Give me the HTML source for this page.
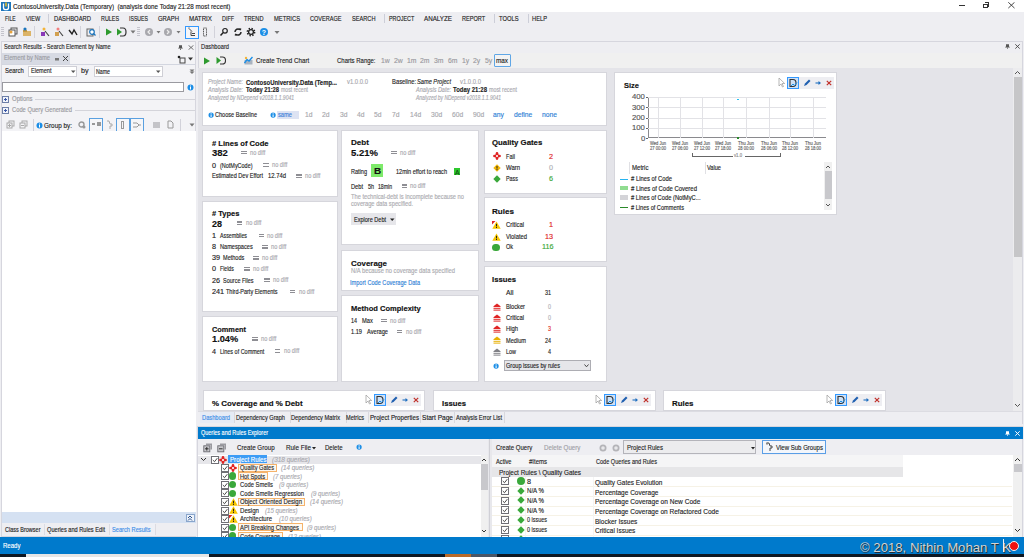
<!DOCTYPE html>
<html><head><meta charset="utf-8">
<style>
*{margin:0;padding:0;box-sizing:border-box}
html,body{width:1024px;height:557px;overflow:hidden;background:#eeeef2;font-family:"Liberation Sans", sans-serif;color:#1e1e1e;position:relative}
.a{position:absolute;white-space:pre;transform-origin:0 0;-webkit-text-stroke:0.15px currentColor}

.ln{background:#cfcfd6}

</style></head><body>
<div class="a" style="left:0px;top:0px;width:1024px;height:12px;background:#fff"></div>
<div class="a" style="left:1px;top:2px;width:10px;height:9px;background:#1c75bc"></div>
<svg class="a" style="left:1px;top:2px" width="10" height="9" viewBox="0 0 10 9"><path d="M2.5 1.5v4.2c0 1.3 1 2 2.5 2s2.5-.7 2.5-2V1.5" stroke="#fff" stroke-width="1.3" fill="none"/><rect x="4.3" y="0.5" width="1.4" height="4" fill="#f7c21c"/></svg>
<div class="a" style="left:12.5px;top:3.00px;font-size:8.05px;line-height:8.05px;color:#222;transform:scaleX(0.780);">ContosoUniversity.Data (Temporary)  (analysis done Today 21:28 most recent)</div>
<div class="a" style="left:959.3px;top:5px;width:6px;height:1px;background:#333"></div>
<div class="a" style="left:983.2px;top:3.8px;width:5px;height:4.5px;border:1px solid #333;background:#fff"></div>
<div class="a" style="left:984.7px;top:2.4px;width:4.6px;height:4.5px;border-top:1px solid #333;border-right:1px solid #333"></div>
<svg class="a" style="left:1007.5px;top:2.2px" width="7" height="7"><path d="M.3 .3l6.2 5.8M6.5 .3L.3 6.1" stroke="#333" stroke-width="0.9"/></svg>
<div class="a" style="left:0px;top:12px;width:1024px;height:28px;background:#eeeef2"></div>
<div class="a" style="left:4.5px;top:15.00px;font-size:7.24px;line-height:7.24px;color:#1e1e1e;transform:scaleX(0.687);">FILE</div>
<div class="a" style="left:25.6px;top:15.00px;font-size:7.24px;line-height:7.24px;color:#1e1e1e;transform:scaleX(0.762);">VIEW</div>
<div class="a" style="left:54px;top:15.00px;font-size:7.24px;line-height:7.24px;color:#1e1e1e;transform:scaleX(0.807);">DASHBOARD</div>
<div class="a" style="left:101px;top:15.00px;font-size:7.24px;line-height:7.24px;color:#1e1e1e;transform:scaleX(0.746);">RULES</div>
<div class="a" style="left:129px;top:15.00px;font-size:7.24px;line-height:7.24px;color:#1e1e1e;transform:scaleX(0.716);">ISSUES</div>
<div class="a" style="left:158px;top:15.00px;font-size:7.24px;line-height:7.24px;color:#1e1e1e;transform:scaleX(0.816);">GRAPH</div>
<div class="a" style="left:189px;top:15.00px;font-size:7.24px;line-height:7.24px;color:#1e1e1e;transform:scaleX(0.858);">MATRIX</div>
<div class="a" style="left:222px;top:15.00px;font-size:7.24px;line-height:7.24px;color:#1e1e1e;transform:scaleX(0.746);">DIFF</div>
<div class="a" style="left:244px;top:15.00px;font-size:7.24px;line-height:7.24px;color:#1e1e1e;transform:scaleX(0.782);">TREND</div>
<div class="a" style="left:274px;top:15.00px;font-size:7.24px;line-height:7.24px;color:#1e1e1e;transform:scaleX(0.798);">METRICS</div>
<div class="a" style="left:310px;top:15.00px;font-size:7.24px;line-height:7.24px;color:#1e1e1e;transform:scaleX(0.766);">COVERAGE</div>
<div class="a" style="left:351.5px;top:15.00px;font-size:7.24px;line-height:7.24px;color:#1e1e1e;transform:scaleX(0.779);">SEARCH</div>
<div class="a" style="left:388.7px;top:15.00px;font-size:7.24px;line-height:7.24px;color:#1e1e1e;transform:scaleX(0.749);">PROJECT</div>
<div class="a" style="left:424px;top:15.00px;font-size:7.24px;line-height:7.24px;color:#1e1e1e;transform:scaleX(0.863);">ANALYZE</div>
<div class="a" style="left:461.5px;top:15.00px;font-size:7.24px;line-height:7.24px;color:#1e1e1e;transform:scaleX(0.770);">REPORT</div>
<div class="a" style="left:498.5px;top:15.00px;font-size:7.24px;line-height:7.24px;color:#1e1e1e;transform:scaleX(0.799);">TOOLS</div>
<div class="a" style="left:532px;top:15.00px;font-size:7.24px;line-height:7.24px;color:#1e1e1e;transform:scaleX(0.793);">HELP</div>
<div class="a" style="left:47.5px;top:14px;width:1px;height:9px;background:#ccced8"></div>
<div class="a" style="left:383.5px;top:14px;width:1px;height:9px;background:#ccced8"></div>
<div class="a" style="left:493.5px;top:14px;width:1px;height:9px;background:#ccced8"></div>
<div class="a" style="left:527.5px;top:14px;width:1px;height:9px;background:#ccced8"></div>
<div class="a" style="left:1px;top:27px;width:3px;height:10px;background:repeating-linear-gradient(#c4c4cc 0 1px,transparent 1px 2px)"></div>
<div class="a" style="left:137px;top:27px;width:3px;height:10px;background:repeating-linear-gradient(#c4c4cc 0 1px,transparent 1px 2px)"></div>
<div class="a" style="left:34px;top:26px;width:1px;height:12px;background:#d2d2da"></div>
<div class="a" style="left:80px;top:26px;width:1px;height:12px;background:#d2d2da"></div>
<div class="a" style="left:99px;top:26px;width:1px;height:12px;background:#d2d2da"></div>
<div class="a" style="left:214px;top:26px;width:1px;height:12px;background:#d2d2da"></div>
<svg class="a" style="left:8px;top:27px" width="10" height="10"><rect x="3" y="1" width="6" height="6" fill="none" stroke="#555"/><rect x="1" y="3" width="6" height="6" fill="#fff" stroke="#555"/><circle cx="3" cy="5" r="1.5" fill="#e6a23c"/></svg>
<svg class="a" style="left:22px;top:27px" width="10" height="10"><rect x="1" y="4" width="8" height="5" fill="#dcb468"/><rect x="1" y="3" width="4" height="2" fill="#c99a3e"/><circle cx="3" cy="2" r="1.6" fill="#1c75bc"/></svg>
<svg class="a" style="left:40px;top:27px" width="10" height="10"><rect x="1" y="5" width="4" height="4" fill="#8a39b8"/><path d="M5 4l4 5" stroke="#444" stroke-width="1.2"/><circle cx="4" cy="2" r="1.5" fill="#f3b43a"/></svg>
<svg class="a" style="left:54px;top:27px" width="10" height="10"><rect x="1" y="5" width="4" height="4" fill="#d2a050"/><path d="M5 4l4 5" stroke="#444" stroke-width="1.2"/><circle cx="4" cy="2" r="1.5" fill="#f28080"/></svg>
<svg class="a" style="left:68px;top:27px" width="10" height="10"><path d="M1 3l3 4 2-4 3 5" stroke="#222" stroke-width="1.4" fill="none"/></svg>
<svg class="a" style="left:86px;top:27px" width="10" height="10"><rect x="1" y="2" width="6" height="7" fill="none" stroke="#666"/><circle cx="6" cy="5" r="2.3" fill="#fff" stroke="#1c75bc" stroke-width="1.2"/><path d="M7.5 6.5l2 2" stroke="#1c75bc" stroke-width="1.3"/></svg>
<svg class="a" style="left:104px;top:27px" width="10" height="10"><path d="M2 1.5l6 3.5-6 3.5z" fill="#2e9a2e"/></svg>
<svg class="a" style="left:116px;top:27px" width="11" height="10"><path d="M1 1.5l5 3.5-5 3.5z" fill="#2e9a2e"/><path d="M4 1h3c2 0 3 1.5 3 4s-1 4-3 4H4" stroke="#333" stroke-width="1.2" fill="none"/></svg>
<svg class="a" style="left:130px;top:29px" width="6" height="6"><path d="M0.5 1.5h5L3 4.5z" fill="#777"/></svg>
<svg class="a" style="left:144px;top:27px" width="10" height="10"><circle cx="5" cy="5" r="4" fill="#a8a8ad"/><path d="M6 3L4 5l2 2" stroke="#eee" stroke-width="1.2" fill="none"/></svg>
<svg class="a" style="left:156px;top:30px" width="5" height="5"><path d="M0.5 1h4L2.5 3.5z" fill="#777"/></svg>
<svg class="a" style="left:163px;top:27px" width="10" height="10"><circle cx="5" cy="5" r="4" fill="#a8a8ad"/><path d="M4 3l2 2-2 2" stroke="#eee" stroke-width="1.2" fill="none"/></svg>
<svg class="a" style="left:176px;top:30px" width="5" height="5"><path d="M0.5 1h4L2.5 3.5z" fill="#777"/></svg>
<div class="a" style="left:185px;top:26px;width:14px;height:13px;border:1px solid #3399ff;background:#f5f5f8"></div>
<svg class="a" style="left:187px;top:27px" width="10" height="10"><path d="M2 1.5l3 3M4 4.5v4h4M5 6.5h3" stroke="#444" stroke-width="1" fill="none"/><path d="M1 1h2" stroke="#999"/></svg>
<svg class="a" style="left:202px;top:27px" width="6" height="10"><rect x="1.5" y="1" width="3" height="8" fill="none" stroke="#555" stroke-dasharray="1.2 .6"/></svg>
<svg class="a" style="left:219px;top:27px" width="10" height="10"><circle cx="6" cy="3.8" r="2.3" fill="none" stroke="#222" stroke-width="1.2"/><path d="M4.3 5.6L1.5 8.5" stroke="#222" stroke-width="1.5"/></svg>
<svg class="a" style="left:232.5px;top:27px" width="10" height="10"><path d="M2 5a3 3 0 0 1 5-2.3M8 5a3 3 0 0 1-5 2.3" stroke="#222" stroke-width="1.5" fill="none"/><path d="M6 1.2l2.3.3-.4 2.3zM4 8.8l-2.3-.3.4-2.3z" fill="#222"/></svg>
<svg class="a" style="left:245.5px;top:27px" width="10" height="10"><circle cx="5" cy="5" r="3.6" fill="none" stroke="#222" stroke-width="1.6" stroke-dasharray="1.4 1.43"/><circle cx="5" cy="5" r="2.4" fill="none" stroke="#222" stroke-width="1.3"/></svg>
<svg class="a" style="left:259px;top:27px" width="10" height="10"><circle cx="5" cy="5" r="4" fill="#1c8ee6"/><text x="5" y="8" font-size="7" font-weight="bold" fill="#fff" text-anchor="middle" font-family="Liberation Sans">?</text></svg>
<svg class="a" style="left:274px;top:30px" width="6" height="5"><path d="M0.5 1h5L3 4z" fill="#777"/></svg>
<div class="a" style="left:1px;top:41px;width:195px;height:496px;background:#f3f3f6;border:1px solid #d6d6de"></div>
<div class="a" style="left:4px;top:44.00px;font-size:6.9px;line-height:6.9px;color:#2a2a2a;transform:scaleX(0.811);">Search Results - Search Element by Name</div>
<svg class="a" style="left:178px;top:44.5px" width="5" height="5"><path d="M1 0.3h3v2.4h.8v.8H.2v-.8H1z" fill="#555"/><path d="M2.5 3.5v1.5" stroke="#555" stroke-width=".8"/></svg>
<svg class="a" style="left:187.5px;top:44.5px" width="6" height="5"><path d="M.5 .3l5 4.4M5.5 .3l-5 4.4" stroke="#555" stroke-width="0.8"/></svg>
<div class="a" style="left:2px;top:53px;width:68px;height:11px;background:#d7dae3"></div>
<div class="a" style="left:3.8px;top:55.00px;font-size:7.13px;line-height:7.13px;color:#9a9aa2;transform:scaleX(0.812);">Element by Name</div>
<svg class="a" style="left:54px;top:56px" width="6" height="6"><rect x="1" y="2" width="4" height="2.5" fill="#777"/></svg>
<svg class="a" style="left:62px;top:55px" width="7" height="7"><path d="M1 1l5 5M6 1l-5 5" stroke="#444" stroke-width="1"/></svg>
<svg class="a" style="left:177px;top:55px" width="9" height="9"><rect x="3" y="3" width="5" height="5" fill="none" stroke="#444"/><circle cx="2" cy="2" r="1.3" fill="#222"/></svg>
<svg class="a" style="left:188px;top:57px" width="5" height="4"><path d="M0 0.5h5L2.5 3.5z" fill="#333"/></svg>
<div class="a" style="left:2px;top:63.5px;width:193px;height:1.5px;background:#d3d6e0"></div>
<div class="a" style="left:4.5px;top:68.00px;font-size:7.13px;line-height:7.13px;color:#1e1e1e;transform:scaleX(0.828);">Search</div>
<div class="a" style="left:28px;top:66px;width:49px;height:11px;background:#fff;border:1px solid #cfcfd6"></div>
<div class="a" style="left:30.5px;top:68.00px;font-size:7.13px;line-height:7.13px;color:#1e1e1e;transform:scaleX(0.784);">Element</div>
<svg class="a" style="left:71px;top:70px" width="5" height="4"><path d="M0 0.5h4.5L2.2 3z" fill="#555"/></svg>
<div class="a" style="left:81px;top:68.00px;font-size:7.13px;line-height:7.13px;color:#1e1e1e;">by</div>
<div class="a" style="left:94px;top:66px;width:69px;height:11px;background:#fff;border:1px solid #cfcfd6"></div>
<div class="a" style="left:96px;top:69.00px;font-size:6.9px;line-height:6.9px;color:#1e1e1e;transform:scaleX(0.761);">Name</div>
<svg class="a" style="left:156px;top:70px" width="5" height="4"><path d="M0 0.5h4.5L2.2 3z" fill="#555"/></svg>
<svg class="a" style="left:189px;top:69px" width="6" height="6"><path d="M0.5 0.5h5L3 3z" fill="#777"/><path d="M0.5 2.5h5L3 5z" fill="#777"/></svg>
<div class="a" style="left:1.5px;top:82px;width:182.5px;height:10px;background:#fff;border:1px solid #9a9aa0"></div>
<svg class="a" style="left:187px;top:84px" width="7" height="7"><circle cx="3.5" cy="3.5" r="3" fill="#1c8ee6"/><rect x="3" y="2.8" width="1" height="2.7" fill="#fff"/><rect x="3" y="1.5" width="1" height="0.9" fill="#fff"/></svg>
<div class="a" style="left:1.5px;top:96px;width:7px;height:7px;border:1px solid #6d7fa8;background:#f0f3fa"></div>
<div class="a" style="left:3.5px;top:99px;width:3px;height:1px;background:#3a57a8"></div>
<div class="a" style="left:4.5px;top:98px;width:1px;height:3px;background:#3a57a8"></div>
<div class="a" style="left:12px;top:96.00px;font-size:7.13px;line-height:7.13px;color:#9a9aa0;transform:scaleX(0.835);">Options</div>
<div class="a" style="left:35px;top:99px;width:160px;height:1px;background:#d4d4da"></div>
<div class="a" style="left:1.5px;top:107px;width:7px;height:7px;border:1px solid #6d7fa8;background:#f0f3fa"></div>
<div class="a" style="left:3.5px;top:110px;width:3px;height:1px;background:#3a57a8"></div>
<div class="a" style="left:4.5px;top:109px;width:1px;height:3px;background:#3a57a8"></div>
<div class="a" style="left:12px;top:107.00px;font-size:7.13px;line-height:7.13px;color:#9a9aa0;transform:scaleX(0.810);">Code Query Generated</div>
<div class="a" style="left:75px;top:110px;width:120px;height:1px;background:#d4d4da"></div>
<svg class="a" style="left:6px;top:120px" width="9" height="9"><rect x="3" y="1" width="5" height="5" fill="none" stroke="#aaa"/><rect x="1" y="3" width="5" height="5" fill="#f3f3f6" stroke="#aaa"/><path d="M2 5.5h3M3.5 4v3" stroke="#aaa"/></svg>
<svg class="a" style="left:19px;top:120px" width="9" height="9"><rect x="3" y="1" width="5" height="5" fill="none" stroke="#aaa"/><rect x="1" y="3" width="5" height="5" fill="#f3f3f6" stroke="#aaa"/><path d="M2 5.5h3" stroke="#aaa"/></svg>
<div class="a" style="left:33px;top:119px;width:1px;height:12px;background:#d2d2da"></div>
<svg class="a" style="left:36px;top:122px" width="7" height="7"><circle cx="3.5" cy="3.5" r="3" fill="#1c8ee6"/><rect x="3" y="2.8" width="1" height="2.7" fill="#fff"/><rect x="3" y="1.5" width="1" height="0.9" fill="#fff"/></svg>
<div class="a" style="left:44px;top:122.00px;font-size:7.47px;line-height:7.47px;color:#1e1e1e;transform:scaleX(0.854);">Group by:</div>
<svg class="a" style="left:78px;top:121px" width="8" height="8"><circle cx="3.5" cy="3.5" r="2.5" fill="none" stroke="#999" stroke-width="1.4"/><circle cx="6" cy="6" r="1.5" fill="#999"/></svg>
<div class="a" style="left:89px;top:118px;width:14px;height:13px;border:1px solid #5aa0e0;border-bottom:none;background:#f6f6f8"></div>
<div class="a" style="left:92px;top:123px;width:3px;height:2px;background:#999"></div>
<div class="a" style="left:97px;top:122px;width:4px;height:4px;background:#999"></div>
<svg class="a" style="left:106px;top:120px" width="8" height="10"><path d="M1 1h2l1 3h2v2H4v3" stroke="#aaa" stroke-width="1" fill="none"/></svg>
<div class="a" style="left:116px;top:118px;width:14px;height:13px;border:1px solid #5aa0e0;border-bottom:none;background:#f6f6f8"></div>
<div class="a" style="left:121px;top:121px;width:3px;height:8px;border:1px solid #999"></div>
<div class="a" style="left:130px;top:118px;width:14px;height:13px;border:1px solid #5aa0e0;border-bottom:none;background:#f6f6f8"></div>
<svg class="a" style="left:132px;top:121px" width="10" height="8"><path d="M1 2h4l2 2h2M1 6h4l2-2" stroke="#999" fill="none"/></svg>
<div class="a" style="left:153px;top:122px;width:7px;height:6px;background:#c4c4c8"></div>
<svg class="a" style="left:167px;top:120px" width="7" height="9"><path d="M1 1h3l2 2v5H1z" fill="none" stroke="#999"/></svg>
<div class="a" style="left:180px;top:119px;width:1px;height:12px;background:#d2d2da"></div>
<svg class="a" style="left:189px;top:123px" width="6" height="4"><path d="M0.5 0.5h5L3 3.5z" fill="#777"/></svg>
<div class="a" style="left:1.5px;top:131px;width:194px;height:381px;background:#fff"></div>
<div class="a" style="left:1.5px;top:512px;width:194px;height:11px;background:#d5e1f2"></div>
<div class="a" style="left:185.5px;top:514px;width:9px;height:8px;border:1px solid #8aa6cc;background:#eef3fa"></div>
<svg class="a" style="left:187px;top:515px" width="6" height="6"><path d="M1 3l2-2 2 2M1 5.5l2-2 2 2" stroke="#2b4f8a" stroke-width="1" fill="none"/></svg>
<div class="a" style="left:1.5px;top:523px;width:194px;height:13px;background:#eeeef2"></div>
<div class="a" style="left:44px;top:524px;width:1px;height:11px;background:#dcdce2"></div>
<div class="a" style="left:108.5px;top:524px;width:1px;height:11px;background:#dcdce2"></div>
<div class="a" style="left:109.5px;top:523px;width:45px;height:13px;background:#eef0f6"></div>
<div class="a" style="left:154.5px;top:524px;width:1px;height:11px;background:#dcdce2"></div>
<div class="a" style="left:5px;top:527.00px;font-size:7.13px;line-height:7.13px;color:#1e1e1e;transform:scaleX(0.773);">Class Browser</div>
<div class="a" style="left:46.5px;top:527.00px;font-size:7.13px;line-height:7.13px;color:#1e1e1e;transform:scaleX(0.791);">Queries and Rules Edit</div>
<div class="a" style="left:112px;top:527.00px;font-size:7.13px;line-height:7.13px;color:#3d8ee8;transform:scaleX(0.797);">Search Results</div>
<div class="a" style="left:198px;top:41px;width:825px;height:383px;background:#eeeef2;border:1px solid #d6d6de"></div>
<div class="a" style="left:201px;top:44.00px;font-size:7.13px;line-height:7.13px;color:#2a2a2a;transform:scaleX(0.803);">Dashboard</div>
<svg class="a" style="left:1005px;top:44.4px" width="5" height="5"><path d="M1 0.3h3v2.4h.8v.8H.2v-.8H1z" fill="#555"/><path d="M2.5 3.5v1.3" stroke="#555" stroke-width=".8"/></svg>
<svg class="a" style="left:1015px;top:44.4px" width="5" height="5"><path d="M.3 .3l4.4 4.3M4.7 .3L.3 4.6" stroke="#444" stroke-width="0.9"/></svg>
<div class="a" style="left:199px;top:52.5px;width:823px;height:15.5px;background:#f0f0f0"></div>
<svg class="a" style="left:203px;top:57px" width="8" height="8"><path d="M1 0.5l6 3.5-6 3.5z" fill="#2e9a2e"/></svg>
<svg class="a" style="left:216px;top:56px" width="10" height="9"><path d="M0.5 1l4.5 3.5-4.5 3.5z" fill="#2e9a2e"/><path d="M4 1h2.5c2 0 3 1.4 3 3.5S8.5 8 6.5 8H4" stroke="#333" stroke-width="1.1" fill="none"/></svg>
<svg class="a" style="left:244px;top:56px" width="9" height="9"><rect x="0.5" y="4" width="8" height="4.5" fill="#aab4c0"/><path d="M0.5 7L3 3.5 5 5 8.5 1" stroke="#1c8ee6" stroke-width="1.4" fill="none"/><circle cx="2" cy="2" r="1.2" fill="#f3b43a"/></svg>
<div class="a" style="left:255.6px;top:57.00px;font-size:8.05px;line-height:8.05px;color:#1e1e1e;transform:scaleX(0.772);">Create Trend Chart</div>
<div class="a" style="left:337.4px;top:57.00px;font-size:8.05px;line-height:8.05px;color:#1e1e1e;transform:scaleX(0.742);">Charts Range:</div>
<div class="a" style="left:381px;top:57.00px;font-size:7.59px;line-height:7.59px;color:#9a9aa0;transform:scaleX(0.900);">1w</div>
<div class="a" style="left:394px;top:57.00px;font-size:7.59px;line-height:7.59px;color:#9a9aa0;transform:scaleX(0.900);">2w</div>
<div class="a" style="left:407px;top:57.00px;font-size:7.59px;line-height:7.59px;color:#9a9aa0;transform:scaleX(0.900);">1m</div>
<div class="a" style="left:420px;top:57.00px;font-size:7.59px;line-height:7.59px;color:#9a9aa0;transform:scaleX(0.900);">2m</div>
<div class="a" style="left:434px;top:57.00px;font-size:7.59px;line-height:7.59px;color:#9a9aa0;transform:scaleX(0.900);">3m</div>
<div class="a" style="left:448px;top:57.00px;font-size:7.59px;line-height:7.59px;color:#9a9aa0;transform:scaleX(0.900);">6m</div>
<div class="a" style="left:462px;top:57.00px;font-size:7.59px;line-height:7.59px;color:#9a9aa0;transform:scaleX(0.900);">1y</div>
<div class="a" style="left:473px;top:57.00px;font-size:7.59px;line-height:7.59px;color:#9a9aa0;transform:scaleX(0.900);">2y</div>
<div class="a" style="left:485px;top:57.00px;font-size:7.59px;line-height:7.59px;color:#9a9aa0;transform:scaleX(0.900);">5y</div>
<div class="a" style="left:493.5px;top:54px;width:17px;height:13.2px;border:1px solid #5fa6e6;border-radius:1px;background:#f3f3f3"></div>
<div class="a" style="left:496px;top:57.00px;font-size:7.59px;line-height:7.59px;color:#1e1e1e;transform:scaleX(0.838);">max</div>
<div class="a" style="left:198px;top:68px;width:815px;height:343px;background:#e4e4e9"></div>
<div class="a" style="left:1013px;top:68px;width:9px;height:343px;background:#ececee"></div>
<div class="a" style="left:1014px;top:77px;width:7.5px;height:180px;background:#c6c6c8"></div>
<svg class="a" style="left:1014px;top:70px" width="7" height="5"><path d="M1 4l2.5-2.5L6 4" stroke="#555" stroke-width="1" fill="none"/></svg>
<svg class="a" style="left:1014px;top:403px" width="7" height="5"><path d="M1 1l2.5 2.5L6 1" stroke="#555" stroke-width="1" fill="none"/></svg>
<div class="a" style="left:202px;top:72px;width:405px;height:53.5px;background:#fff;border:1px solid #d6d6dc"></div>
<div class="a" style="left:208px;top:78.00px;font-size:7.47px;line-height:7.47px;color:#a8a8ae;font-style:italic;transform:scaleX(0.740);">Project Name:</div>
<div class="a" style="left:246px;top:79.00px;font-size:7.0px;line-height:7.0px;color:#1e1e1e;font-weight:bold;transform:scaleX(0.850);">ContosoUniversity.Data (Temp...</div>
<div class="a" style="left:347px;top:78.00px;font-size:7.47px;line-height:7.47px;color:#a8a8ae;transform:scaleX(0.790);">v1.0.0.0</div>
<div class="a" style="left:208px;top:86.00px;font-size:7.47px;line-height:7.47px;color:#a8a8ae;font-style:italic;transform:scaleX(0.733);">Analysis Date:</div>
<div class="a" style="left:246px;top:86.00px;font-size:7.5px;line-height:7.5px;color:#1e1e1e;font-weight:bold;transform:scaleX(0.771);">Today 21:28</div>
<div class="a" style="left:281px;top:86.00px;font-size:7.47px;line-height:7.47px;color:#a8a8ae;transform:scaleX(0.692);">most recent</div>
<div class="a" style="left:208px;top:95.00px;font-size:6.9px;line-height:6.9px;color:#a8a8ae;font-style:italic;transform:scaleX(0.729);">Analyzed by NDepend v2018.1.1.9041</div>
<div class="a" style="left:392px;top:78.00px;font-size:7.47px;line-height:7.47px;color:#1e1e1e;transform:scaleX(0.781);">Baseline:</div>
<div class="a" style="left:417px;top:78.00px;font-size:7.47px;line-height:7.47px;color:#1e1e1e;font-style:italic;transform:scaleX(0.758);">Same Project</div>
<div class="a" style="left:460px;top:78.00px;font-size:7.47px;line-height:7.47px;color:#a8a8ae;transform:scaleX(0.790);">v1.0.0.0</div>
<div class="a" style="left:416px;top:86.00px;font-size:7.47px;line-height:7.47px;color:#a8a8ae;font-style:italic;transform:scaleX(0.733);">Analysis Date:</div>
<div class="a" style="left:453px;top:86.00px;font-size:7.5px;line-height:7.5px;color:#1e1e1e;font-weight:bold;transform:scaleX(0.794);">Today 21:28</div>
<div class="a" style="left:489px;top:86.00px;font-size:7.47px;line-height:7.47px;color:#a8a8ae;transform:scaleX(0.717);">most recent</div>
<div class="a" style="left:416px;top:95.00px;font-size:6.9px;line-height:6.9px;color:#a8a8ae;font-style:italic;transform:scaleX(0.720);">Analyzed by NDepend v2018.1.1.9041</div>
<svg class="a" style="left:208px;top:111.5px" width="6.2" height="6.2"><circle cx="3.1" cy="3.1" r="2.6" fill="#1c8ee6"/><rect x="2.6" y="2.4" width="1" height="2.6" fill="#fff"/><rect x="2.6" y="0.8" width="1" height="0.9" fill="#fff"/></svg>
<div class="a" style="left:215px;top:111.00px;font-size:7.82px;line-height:7.82px;color:#1e1e1e;transform:scaleX(0.711);">Choose Baseline</div>
<svg class="a" style="left:270px;top:111.5px" width="6.2" height="6.2"><circle cx="3.1" cy="3.1" r="2.6" fill="#1c8ee6"/><rect x="2.6" y="2.4" width="1" height="2.6" fill="#fff"/><rect x="2.6" y="0.8" width="1" height="0.9" fill="#fff"/></svg>
<div class="a" style="left:277px;top:111px;width:22px;height:8px;background:#dde3f3"></div>
<div class="a" style="left:278px;top:111.00px;font-size:7.47px;line-height:7.47px;color:#3d7fd9;transform:scaleX(0.766);">same</div>
<div class="a" style="left:305px;top:111.00px;font-size:7.47px;line-height:7.47px;color:#a8a8ae;transform:scaleX(0.900);">1d</div>
<div class="a" style="left:322px;top:111.00px;font-size:7.47px;line-height:7.47px;color:#a8a8ae;transform:scaleX(0.900);">2d</div>
<div class="a" style="left:340px;top:111.00px;font-size:7.47px;line-height:7.47px;color:#a8a8ae;transform:scaleX(0.900);">3d</div>
<div class="a" style="left:357px;top:111.00px;font-size:7.47px;line-height:7.47px;color:#a8a8ae;transform:scaleX(0.900);">4d</div>
<div class="a" style="left:374px;top:111.00px;font-size:7.47px;line-height:7.47px;color:#a8a8ae;transform:scaleX(0.900);">5d</div>
<div class="a" style="left:392px;top:111.00px;font-size:7.47px;line-height:7.47px;color:#a8a8ae;transform:scaleX(0.900);">7d</div>
<div class="a" style="left:410px;top:111.00px;font-size:7.47px;line-height:7.47px;color:#a8a8ae;transform:scaleX(0.900);">14d</div>
<div class="a" style="left:431px;top:111.00px;font-size:7.47px;line-height:7.47px;color:#a8a8ae;transform:scaleX(0.900);">30d</div>
<div class="a" style="left:452px;top:111.00px;font-size:7.47px;line-height:7.47px;color:#a8a8ae;transform:scaleX(0.900);">60d</div>
<div class="a" style="left:473px;top:111.00px;font-size:7.47px;line-height:7.47px;color:#a8a8ae;transform:scaleX(0.900);">90d</div>
<div class="a" style="left:493px;top:111.00px;font-size:7.47px;line-height:7.47px;color:#2f7fd6;transform:scaleX(0.900);">any</div>
<div class="a" style="left:514px;top:111.00px;font-size:7.47px;line-height:7.47px;color:#2f7fd6;transform:scaleX(0.900);">define</div>
<div class="a" style="left:542px;top:111.00px;font-size:7.47px;line-height:7.47px;color:#2f7fd6;transform:scaleX(0.900);">none</div>
<div class="a" style="left:202px;top:129.5px;width:136px;height:67px;background:#fff;border:1px solid #d6d6dc"></div>
<div class="a" style="left:212px;top:140.00px;font-size:7.8px;line-height:7.8px;color:#111;font-weight:bold;transform:scaleX(0.975);"># Lines of Code</div>
<div class="a" style="left:212px;top:148.00px;font-size:9.5px;line-height:9.5px;color:#111;font-weight:bold;">382</div>
<div class="a" style="left:241.1px;top:150.5px;width:5.5px;height:1.3px;background:#8e8e94"></div>
<div class="a" style="left:241.1px;top:152.8px;width:5.5px;height:1.3px;background:#8e8e94"></div>
<div class="a" style="left:249.79999999999998px;top:150.00px;font-size:6.9px;line-height:6.9px;color:#a8a8ae;transform:scaleX(0.820);">no diff</div>
<div class="a" style="left:212px;top:162.00px;font-size:7.24px;line-height:7.24px;color:#1e1e1e;">0</div>
<div class="a" style="left:219.8px;top:162.00px;font-size:7.24px;line-height:7.24px;color:#1e1e1e;transform:scaleX(0.756);">(NotMyCode)</div>
<div class="a" style="left:263.1px;top:163.2px;width:5.5px;height:1.3px;background:#8e8e94"></div>
<div class="a" style="left:263.1px;top:165.5px;width:5.5px;height:1.3px;background:#8e8e94"></div>
<div class="a" style="left:271.8px;top:162.00px;font-size:6.9px;line-height:6.9px;color:#a8a8ae;transform:scaleX(0.820);">no diff</div>
<div class="a" style="left:212px;top:172.00px;font-size:7.24px;line-height:7.24px;color:#1e1e1e;transform:scaleX(0.770);">Estimated Dev Effort</div>
<div class="a" style="left:268px;top:172.00px;font-size:7.24px;line-height:7.24px;color:#1e1e1e;transform:scaleX(0.813);">12.74d</div>
<div class="a" style="left:296.3px;top:174.4px;width:5.5px;height:1.3px;background:#8e8e94"></div>
<div class="a" style="left:296.3px;top:176.70000000000002px;width:5.5px;height:1.3px;background:#8e8e94"></div>
<div class="a" style="left:305.0px;top:173.00px;font-size:6.9px;line-height:6.9px;color:#a8a8ae;transform:scaleX(0.820);">no diff</div>
<div class="a" style="left:202px;top:200.5px;width:136px;height:111px;background:#fff;border:1px solid #d6d6dc"></div>
<div class="a" style="left:212px;top:210.00px;font-size:7.8px;line-height:7.8px;color:#111;font-weight:bold;transform:scaleX(0.966);"># Types</div>
<div class="a" style="left:212px;top:219.00px;font-size:9.5px;line-height:9.5px;color:#111;font-weight:bold;transform:scaleX(0.945);">28</div>
<div class="a" style="left:236.8px;top:221.4px;width:5.5px;height:1.3px;background:#8e8e94"></div>
<div class="a" style="left:236.8px;top:223.70000000000002px;width:5.5px;height:1.3px;background:#8e8e94"></div>
<div class="a" style="left:245.5px;top:220.00px;font-size:6.9px;line-height:6.9px;color:#a8a8ae;transform:scaleX(0.820);">no diff</div>
<div class="a" style="left:212px;top:232.00px;font-size:7.24px;line-height:7.24px;color:#1e1e1e;">1</div>
<div class="a" style="left:219.8px;top:232.00px;font-size:7.24px;line-height:7.24px;color:#1e1e1e;transform:scaleX(0.730);">Assemblies</div>
<div class="a" style="left:258.5px;top:233.7px;width:5.5px;height:1.3px;background:#8e8e94"></div>
<div class="a" style="left:258.5px;top:236.0px;width:5.5px;height:1.3px;background:#8e8e94"></div>
<div class="a" style="left:267.2px;top:233.00px;font-size:6.9px;line-height:6.9px;color:#a8a8ae;transform:scaleX(0.820);">no diff</div>
<div class="a" style="left:212px;top:243.00px;font-size:7.24px;line-height:7.24px;color:#1e1e1e;">8</div>
<div class="a" style="left:219.8px;top:243.00px;font-size:7.24px;line-height:7.24px;color:#1e1e1e;transform:scaleX(0.774);">Namespaces</div>
<div class="a" style="left:262.2px;top:245.1px;width:5.5px;height:1.3px;background:#8e8e94"></div>
<div class="a" style="left:262.2px;top:247.4px;width:5.5px;height:1.3px;background:#8e8e94"></div>
<div class="a" style="left:270.9px;top:244.00px;font-size:6.9px;line-height:6.9px;color:#a8a8ae;transform:scaleX(0.820);">no diff</div>
<div class="a" style="left:212px;top:254.00px;font-size:7.24px;line-height:7.24px;color:#1e1e1e;">39</div>
<div class="a" style="left:223px;top:254.00px;font-size:7.24px;line-height:7.24px;color:#1e1e1e;transform:scaleX(0.768);">Methods</div>
<div class="a" style="left:253.1px;top:256.09999999999997px;width:5.5px;height:1.3px;background:#8e8e94"></div>
<div class="a" style="left:253.1px;top:258.4px;width:5.5px;height:1.3px;background:#8e8e94"></div>
<div class="a" style="left:261.8px;top:255.00px;font-size:6.9px;line-height:6.9px;color:#a8a8ae;transform:scaleX(0.820);">no diff</div>
<div class="a" style="left:212px;top:265.00px;font-size:7.24px;line-height:7.24px;color:#1e1e1e;">0</div>
<div class="a" style="left:219.8px;top:265.00px;font-size:7.24px;line-height:7.24px;color:#1e1e1e;transform:scaleX(0.715);">Fields</div>
<div class="a" style="left:244.3px;top:267.0px;width:5.5px;height:1.3px;background:#8e8e94"></div>
<div class="a" style="left:244.3px;top:269.3px;width:5.5px;height:1.3px;background:#8e8e94"></div>
<div class="a" style="left:253.0px;top:266.00px;font-size:6.9px;line-height:6.9px;color:#a8a8ae;transform:scaleX(0.820);">no diff</div>
<div class="a" style="left:212px;top:277.00px;font-size:7.24px;line-height:7.24px;color:#1e1e1e;">26</div>
<div class="a" style="left:223px;top:277.00px;font-size:7.24px;line-height:7.24px;color:#1e1e1e;transform:scaleX(0.761);">Source Files</div>
<div class="a" style="left:264.4px;top:278.3px;width:5.5px;height:1.3px;background:#8e8e94"></div>
<div class="a" style="left:264.4px;top:280.6px;width:5.5px;height:1.3px;background:#8e8e94"></div>
<div class="a" style="left:273.09999999999997px;top:277.00px;font-size:6.9px;line-height:6.9px;color:#a8a8ae;transform:scaleX(0.820);">no diff</div>
<div class="a" style="left:212px;top:288.00px;font-size:7.24px;line-height:7.24px;color:#1e1e1e;">241</div>
<div class="a" style="left:226.1px;top:288.00px;font-size:7.24px;line-height:7.24px;color:#1e1e1e;transform:scaleX(0.758);">Third-Party Elements</div>
<div class="a" style="left:289.9px;top:289.7px;width:5.5px;height:1.3px;background:#8e8e94"></div>
<div class="a" style="left:289.9px;top:292.0px;width:5.5px;height:1.3px;background:#8e8e94"></div>
<div class="a" style="left:298.59999999999997px;top:289.00px;font-size:6.9px;line-height:6.9px;color:#a8a8ae;transform:scaleX(0.820);">no diff</div>
<div class="a" style="left:202px;top:316px;width:136px;height:66px;background:#fff;border:1px solid #d6d6dc"></div>
<div class="a" style="left:212px;top:326.00px;font-size:7.8px;line-height:7.8px;color:#111;font-weight:bold;transform:scaleX(0.945);">Comment</div>
<div class="a" style="left:212px;top:334.00px;font-size:9.5px;line-height:9.5px;color:#111;font-weight:bold;transform:scaleX(0.973);">1.04%</div>
<div class="a" style="left:252px;top:337px;width:5.5px;height:1.3px;background:#8e8e94"></div>
<div class="a" style="left:252px;top:339.3px;width:5.5px;height:1.3px;background:#8e8e94"></div>
<div class="a" style="left:260.7px;top:336.00px;font-size:6.9px;line-height:6.9px;color:#a8a8ae;transform:scaleX(0.820);">no diff</div>
<div class="a" style="left:212px;top:348.00px;font-size:7.24px;line-height:7.24px;color:#1e1e1e;">4</div>
<div class="a" style="left:219.7px;top:348.00px;font-size:7.24px;line-height:7.24px;color:#1e1e1e;transform:scaleX(0.756);">Lines of Comment</div>
<div class="a" style="left:274.8px;top:349.2px;width:5.5px;height:1.3px;background:#8e8e94"></div>
<div class="a" style="left:274.8px;top:351.5px;width:5.5px;height:1.3px;background:#8e8e94"></div>
<div class="a" style="left:283.5px;top:348.00px;font-size:6.9px;line-height:6.9px;color:#a8a8ae;transform:scaleX(0.820);">no diff</div>
<div class="a" style="left:341px;top:129.5px;width:138px;height:115.5px;background:#fff;border:1px solid #d6d6dc"></div>
<div class="a" style="left:351px;top:139.00px;font-size:7.8px;line-height:7.8px;color:#111;font-weight:bold;transform:scaleX(1.039);">Debt</div>
<div class="a" style="left:351px;top:148.00px;font-size:9.5px;line-height:9.5px;color:#111;font-weight:bold;">5.21%</div>
<div class="a" style="left:391.3px;top:150.6px;width:5.5px;height:1.3px;background:#8e8e94"></div>
<div class="a" style="left:391.3px;top:152.9px;width:5.5px;height:1.3px;background:#8e8e94"></div>
<div class="a" style="left:400.0px;top:150.00px;font-size:6.9px;line-height:6.9px;color:#a8a8ae;transform:scaleX(0.820);">no diff</div>
<div class="a" style="left:351px;top:168.00px;font-size:7.24px;line-height:7.24px;color:#1e1e1e;transform:scaleX(0.765);">Rating</div>
<div class="a" style="left:371px;top:164.3px;width:12px;height:12.7px;background:#7eea6a"></div>
<div class="a" style="left:373.8px;top:166.00px;font-size:9.6px;line-height:9.6px;color:#111;font-weight:bold;transform:scaleX(1.038);">B</div>
<div class="a" style="left:396.1px;top:168.00px;font-size:7.24px;line-height:7.24px;color:#1e1e1e;transform:scaleX(0.770);">12min effort to reach</div>
<div class="a" style="left:454px;top:168.2px;width:6.3px;height:7px;background:#2ec82e"></div>
<div class="a" style="left:455px;top:170.00px;font-size:6.9px;line-height:6.9px;color:#134a13;transform:scaleX(0.976);">A</div>
<div class="a" style="left:351px;top:183.00px;font-size:7.24px;line-height:7.24px;color:#1e1e1e;transform:scaleX(0.785);">Debt</div>
<div class="a" style="left:368.1px;top:183.00px;font-size:7.24px;line-height:7.24px;color:#1e1e1e;transform:scaleX(0.758);">5h</div>
<div class="a" style="left:377.8px;top:183.00px;font-size:7.24px;line-height:7.24px;color:#1e1e1e;transform:scaleX(0.710);">18min</div>
<div class="a" style="left:401.5px;top:184.3px;width:5.5px;height:1.3px;background:#8e8e94"></div>
<div class="a" style="left:401.5px;top:186.60000000000002px;width:5.5px;height:1.3px;background:#8e8e94"></div>
<div class="a" style="left:410.2px;top:183.00px;font-size:6.9px;line-height:6.9px;color:#a8a8ae;transform:scaleX(0.820);">no diff</div>
<div class="a" style="left:351px;top:194.00px;font-size:7.13px;line-height:7.13px;color:#ababb0;transform:scaleX(0.801);">The technical-debt is incomplete because no</div>
<div class="a" style="left:351px;top:201.00px;font-size:7.13px;line-height:7.13px;color:#ababb0;transform:scaleX(0.803);">coverage data specified.</div>
<div class="a" style="left:351px;top:213px;width:45px;height:12.4px;background:#e6e6ea"></div>
<div class="a" style="left:354px;top:216.00px;font-size:7.24px;line-height:7.24px;color:#1e1e1e;transform:scaleX(0.765);">Explore Debt</div>
<svg class="a" style="left:390px;top:217.5px" width="5" height="4"><path d="M0 0.5h4.5L2.2 3z" fill="#222"/></svg>
<div class="a" style="left:341px;top:250px;width:138px;height:41px;background:#fff;border:1px solid #d6d6dc"></div>
<div class="a" style="left:351px;top:260.00px;font-size:7.8px;line-height:7.8px;color:#111;font-weight:bold;transform:scaleX(1.013);">Coverage</div>
<div class="a" style="left:351px;top:268.00px;font-size:7.13px;line-height:7.13px;color:#ababb0;transform:scaleX(0.815);">N/A because no coverage data specified</div>
<div class="a" style="left:350px;top:279.00px;font-size:7.24px;line-height:7.24px;color:#2f7fd6;transform:scaleX(0.774);">Import Code Coverage Data</div>
<div class="a" style="left:341px;top:295px;width:138px;height:87px;background:#fff;border:1px solid #d6d6dc"></div>
<div class="a" style="left:351px;top:305.00px;font-size:7.8px;line-height:7.8px;color:#111;font-weight:bold;transform:scaleX(0.969);">Method Complexity</div>
<div class="a" style="left:351px;top:317.00px;font-size:7.24px;line-height:7.24px;color:#1e1e1e;transform:scaleX(0.746);">14</div>
<div class="a" style="left:362.1px;top:317.00px;font-size:7.24px;line-height:7.24px;color:#1e1e1e;transform:scaleX(0.790);">Max</div>
<div class="a" style="left:381.2px;top:318.6px;width:5.5px;height:1.3px;background:#8e8e94"></div>
<div class="a" style="left:381.2px;top:320.90000000000003px;width:5.5px;height:1.3px;background:#8e8e94"></div>
<div class="a" style="left:389.9px;top:318.00px;font-size:6.9px;line-height:6.9px;color:#a8a8ae;transform:scaleX(0.820);">no diff</div>
<div class="a" style="left:351px;top:328.00px;font-size:7.24px;line-height:7.24px;color:#1e1e1e;transform:scaleX(0.780);">1.19</div>
<div class="a" style="left:367px;top:328.00px;font-size:7.24px;line-height:7.24px;color:#1e1e1e;transform:scaleX(0.783);">Average</div>
<div class="a" style="left:396.8px;top:329.6px;width:5.5px;height:1.3px;background:#8e8e94"></div>
<div class="a" style="left:396.8px;top:331.90000000000003px;width:5.5px;height:1.3px;background:#8e8e94"></div>
<div class="a" style="left:405.5px;top:329.00px;font-size:6.9px;line-height:6.9px;color:#a8a8ae;transform:scaleX(0.820);">no diff</div>
<div class="a" style="left:483.5px;top:130px;width:123.5px;height:64px;background:#fff;border:1px solid #d6d6dc"></div>
<div class="a" style="left:492px;top:139.00px;font-size:7.8px;line-height:7.8px;color:#111;font-weight:bold;">Quality Gates</div>
<svg class="a" style="left:492.5px;top:152.3px" width="8" height="8"><path d="M4 0.8L7.2 4 4 7.2 0.8 4z" fill="#e02424"/><circle cx="4" cy="1.4" r="1.3" fill="#e02424"/><circle cx="4" cy="6.6" r="1.3" fill="#e02424"/><circle cx="1.4" cy="4" r="1.3" fill="#e02424"/><circle cx="6.6" cy="4" r="1.3" fill="#e02424"/><path d="M2.8 2.8l2.4 2.4M5.2 2.8l-2.4 2.4" stroke="#fff" stroke-width="0.8"/></svg>
<div class="a" style="left:506px;top:153.00px;font-size:7.24px;line-height:7.24px;color:#1e1e1e;transform:scaleX(0.771);">Fail</div>
<div class="a" style="left:549px;top:153.00px;font-size:7.24px;line-height:7.24px;color:#e02424;">2</div>
<svg class="a" style="left:492.5px;top:163.5px" width="8" height="8"><path d="M4 0.3L7.7 4 4 7.7 0.3 4z" fill="#f2b705"/><rect x="3.5" y="2" width="1" height="2.6" fill="#222"/><rect x="3.5" y="5.1" width="1" height="1" fill="#222"/></svg>
<div class="a" style="left:506px;top:164.00px;font-size:7.24px;line-height:7.24px;color:#1e1e1e;transform:scaleX(0.823);">Warn</div>
<div class="a" style="left:549px;top:164.00px;font-size:7.24px;line-height:7.24px;color:#b0b0b5;">0</div>
<svg class="a" style="left:492.5px;top:174.8px" width="8" height="8"><path d="M4 0.3L7.7 4 4 7.7 0.3 4z" fill="#3aa83a"/></svg>
<div class="a" style="left:506px;top:175.00px;font-size:7.24px;line-height:7.24px;color:#1e1e1e;transform:scaleX(0.746);">Pass</div>
<div class="a" style="left:549px;top:175.00px;font-size:7.24px;line-height:7.24px;color:#3aa83a;">6</div>
<div class="a" style="left:483.5px;top:197.3px;width:123.5px;height:64.5px;background:#fff;border:1px solid #d6d6dc"></div>
<div class="a" style="left:492px;top:208.00px;font-size:7.8px;line-height:7.8px;color:#111;font-weight:bold;transform:scaleX(1.036);">Rules</div>
<svg class="a" style="left:492px;top:220.8px" width="9" height="8"><path d="M4.5 0.5L8.7 7.7H0.3z" fill="#f7c600"/><rect x="4" y="2.8" width="1" height="2.6" fill="#222"/><rect x="4" y="6" width="1" height="1" fill="#222"/><path d="M0 0h3.5L0 3.5z" fill="#e02424"/></svg>
<div class="a" style="left:506px;top:221.00px;font-size:7.24px;line-height:7.24px;color:#1e1e1e;transform:scaleX(0.814);">Critical</div>
<div class="a" style="left:549px;top:221.00px;font-size:7.24px;line-height:7.24px;color:#e02424;">1</div>
<svg class="a" style="left:492px;top:232.8px" width="9" height="8"><path d="M4.5 0.5L8.7 7.7H0.3z" fill="#f7c600"/><rect x="4" y="2.8" width="1" height="2.6" fill="#222"/><rect x="4" y="6" width="1" height="1" fill="#222"/></svg>
<div class="a" style="left:506px;top:233.00px;font-size:7.24px;line-height:7.24px;color:#1e1e1e;transform:scaleX(0.807);">Violated</div>
<div class="a" style="left:545px;top:233.00px;font-size:7.24px;line-height:7.24px;color:#e02424;">13</div>
<div class="a" style="left:492.3px;top:243.6px;width:7.4px;height:7.4px;border-radius:50%;background:#3aa83a"></div>
<div class="a" style="left:506px;top:243.00px;font-size:7.24px;line-height:7.24px;color:#1e1e1e;transform:scaleX(0.757);">Ok</div>
<div class="a" style="left:542px;top:243.00px;font-size:7.24px;line-height:7.24px;color:#3aa83a;">116</div>
<div class="a" style="left:483.5px;top:265.5px;width:123.5px;height:116.5px;background:#fff;border:1px solid #d6d6dc"></div>
<div class="a" style="left:492px;top:276.00px;font-size:7.8px;line-height:7.8px;color:#111;font-weight:bold;transform:scaleX(0.988);">Issues</div>
<div class="a" style="left:506px;top:289.00px;font-size:7.24px;line-height:7.24px;color:#1e1e1e;transform:scaleX(0.932);">All</div>
<div class="a" style="left:545px;top:289.00px;font-size:7.24px;line-height:7.24px;color:#1e1e1e;transform:scaleX(0.746);">31</div>
<svg class="a" style="left:492.5px;top:302.5px" width="8" height="8"><path d="M4 0.5L7.5 3.2V4H0.5v-.8z" fill="#e02424"/><rect x="0.5" y="4.8" width="7" height="1" fill="#e02424"/><rect x="0.5" y="6.6" width="7" height="1" fill="#e02424"/></svg>
<div class="a" style="left:506px;top:303.00px;font-size:7.24px;line-height:7.24px;color:#1e1e1e;transform:scaleX(0.788);">Blocker</div>
<div class="a" style="left:548px;top:303.00px;font-size:7.24px;line-height:7.24px;color:#b0b0b5;transform:scaleX(0.744);">0</div>
<svg class="a" style="left:492.5px;top:313.5px" width="8" height="8"><path d="M4 0.5L7.5 3.2V4H0.5v-.8z" fill="#e02424"/><rect x="0.5" y="4.8" width="7" height="1" fill="#e02424"/><rect x="0.5" y="6.6" width="7" height="1" fill="#e02424"/></svg>
<div class="a" style="left:506px;top:314.00px;font-size:7.24px;line-height:7.24px;color:#1e1e1e;transform:scaleX(0.814);">Critical</div>
<div class="a" style="left:548px;top:314.00px;font-size:7.24px;line-height:7.24px;color:#b0b0b5;transform:scaleX(0.744);">0</div>
<svg class="a" style="left:492.5px;top:325.1px" width="8" height="8"><path d="M4 0.5L7.5 3.2V4H0.5v-.8z" fill="#e02424"/><rect x="0.5" y="4.8" width="7" height="1" fill="#e02424"/><rect x="0.5" y="6.6" width="7" height="1" fill="#e02424"/></svg>
<div class="a" style="left:506px;top:325.00px;font-size:7.24px;line-height:7.24px;color:#1e1e1e;transform:scaleX(0.806);">High</div>
<div class="a" style="left:548px;top:325.00px;font-size:7.24px;line-height:7.24px;color:#e02424;transform:scaleX(0.744);">3</div>
<svg class="a" style="left:492.5px;top:336.2px" width="8" height="8"><path d="M4 0.5L7.5 3.2V4H0.5v-.8z" fill="#e8b000"/><rect x="0.5" y="4.8" width="7" height="1" fill="#e8b000"/><rect x="0.5" y="6.6" width="7" height="1" fill="#e8b000"/></svg>
<div class="a" style="left:506px;top:337.00px;font-size:7.24px;line-height:7.24px;color:#1e1e1e;transform:scaleX(0.777);">Medium</div>
<div class="a" style="left:545px;top:337.00px;font-size:7.24px;line-height:7.24px;color:#1e1e1e;transform:scaleX(0.746);">24</div>
<svg class="a" style="left:492.5px;top:347.5px" width="8" height="8"><path d="M4 0.5L7.5 3.2V4H0.5v-.8z" fill="#808086"/><rect x="0.5" y="4.8" width="7" height="1" fill="#808086"/><rect x="0.5" y="6.6" width="7" height="1" fill="#808086"/></svg>
<div class="a" style="left:506px;top:348.00px;font-size:7.24px;line-height:7.24px;color:#1e1e1e;transform:scaleX(0.753);">Low</div>
<div class="a" style="left:548px;top:348.00px;font-size:7.24px;line-height:7.24px;color:#1e1e1e;transform:scaleX(0.744);">4</div>
<svg class="a" style="left:493px;top:362.5px" width="6.2" height="6.2"><circle cx="3.1" cy="3.1" r="2.6" fill="#1c8ee6"/><rect x="2.6" y="2.4" width="1" height="2.6" fill="#fff"/><rect x="2.6" y="0.8" width="1" height="0.9" fill="#fff"/></svg>
<div class="a" style="left:504px;top:360.3px;width:87px;height:10.5px;background:#e6e6ea;border:1px solid #adadb3"></div>
<div class="a" style="left:506px;top:362.00px;font-size:7.24px;line-height:7.24px;color:#1e1e1e;transform:scaleX(0.772);">Group issues by rules</div>
<svg class="a" style="left:584px;top:364px" width="5" height="4"><path d="M0.5 0.5L2.5 2.8 4.5 0.5" stroke="#444" fill="none"/></svg>
<div class="a" style="left:614.2px;top:71.5px;width:223px;height:143px;background:#fff;border:1px solid #d6d6dc"></div>
<div class="a" style="left:624px;top:82.00px;font-size:7.8px;line-height:7.8px;color:#111;font-weight:bold;transform:scaleX(0.961);">Size</div>
<svg class="a" style="left:778px;top:77px" width="7" height="11"><path d="M1 1v8l2-2 1.5 3 1-.5L4 6.5h2.7z" fill="#fff" stroke="#999" stroke-width=".7"/></svg>
<div class="a" style="left:787px;top:77px;width:47px;height:12px;background:#eeeef2"></div>
<div class="a" style="left:787px;top:77px;width:12px;height:12px;background:#cde0f6;border:1px solid #3399ff"></div>
<svg class="a" style="left:788px;top:78px" width="10" height="10"><path d="M2 1.5h3c2 0 3 1.5 3 3.5s-1 3.5-3 3.5H2z" fill="none" stroke="#333" stroke-width="1.1"/><path d="M3 8l2-2 1.5 1.5L9 4.5" stroke="#1c8ee6" stroke-width="1" fill="none"/></svg>
<svg class="a" style="left:803px;top:79px" width="8" height="8"><path d="M1 7l1-2.5L6 .5 7.5 2 3.5 6z" fill="#1f5fb0"/></svg>
<svg class="a" style="left:815px;top:80px" width="7" height="6"><path d="M0.5 3h4.5" stroke="#1f6fc0" stroke-width="1.1"/><path d="M3.5 1l2.5 2-2.5 2z" fill="#1f6fc0"/></svg>
<svg class="a" style="left:826px;top:80px" width="6" height="6"><path d="M0.8 0.8l4.4 4.4M5.2 0.8L0.8 5.2" stroke="#c0302a" stroke-width="1.2"/></svg>
<div class="a" style="left:647.5px;top:96.5px;width:178px;height:41.5px;border-left:1px solid #8a8a8e;border-bottom:1px solid #8a8a8e"></div>
<div class="a" style="left:648px;top:96.5px;width:178px;height:1px;background:#e2e2e6"></div>
<div class="a" style="left:648px;top:107.3px;width:178px;height:1px;background:#e2e2e6"></div>
<div class="a" style="left:648px;top:117.5px;width:178px;height:1px;background:#e2e2e6"></div>
<div class="a" style="left:648px;top:127.8px;width:178px;height:1px;background:#e2e2e6"></div>
<div class="a" style="left:658px;top:96.5px;width:1px;height:41.5px;background:#e2e2e6"></div>
<div class="a" style="left:679.6px;top:96.5px;width:1px;height:41.5px;background:#e2e2e6"></div>
<div class="a" style="left:701.5px;top:96.5px;width:1px;height:41.5px;background:#e2e2e6"></div>
<div class="a" style="left:723.3px;top:96.5px;width:1px;height:41.5px;background:#e2e2e6"></div>
<div class="a" style="left:746.3px;top:96.5px;width:1px;height:41.5px;background:#e2e2e6"></div>
<div class="a" style="left:768.5px;top:96.5px;width:1px;height:41.5px;background:#e2e2e6"></div>
<div class="a" style="left:790.4px;top:96.5px;width:1px;height:41.5px;background:#e2e2e6"></div>
<div class="a" style="left:812.7px;top:96.5px;width:1px;height:41.5px;background:#e2e2e6"></div>
<div class="a" style="left:632.1px;top:93.00px;font-size:7.82px;line-height:7.82px;color:#555;transform:scaleX(0.989);">400</div>
<div class="a" style="left:645.5px;top:96.5px;width:2px;height:1px;background:#666"></div>
<div class="a" style="left:632.1px;top:104.00px;font-size:7.82px;line-height:7.82px;color:#555;transform:scaleX(0.989);">300</div>
<div class="a" style="left:645.5px;top:107.3px;width:2px;height:1px;background:#666"></div>
<div class="a" style="left:632.1px;top:114.00px;font-size:7.82px;line-height:7.82px;color:#555;transform:scaleX(0.989);">200</div>
<div class="a" style="left:645.5px;top:117.5px;width:2px;height:1px;background:#666"></div>
<div class="a" style="left:632.1px;top:124.00px;font-size:7.82px;line-height:7.82px;color:#555;transform:scaleX(0.989);">100</div>
<div class="a" style="left:645.5px;top:127.8px;width:2px;height:1px;background:#666"></div>
<div class="a" style="left:640.7px;top:135.00px;font-size:7.82px;line-height:7.82px;color:#555;transform:scaleX(0.986);">0</div>
<div class="a" style="left:645.5px;top:138px;width:2px;height:1px;background:#666"></div>
<div class="a" style="left:736.5px;top:98.5px;width:2px;height:1.5px;background:#28c0f0"></div>
<div class="a" style="left:736.5px;top:137px;width:2px;height:1.5px;background:#2a8a2a"></div>
<div class="a" style="left:650px;top:141.00px;font-size:5.17px;line-height:5.17px;color:#666;transform:scaleX(0.790);">Wed Jun</div>
<div class="a" style="left:650px;top:146.00px;font-size:5.17px;line-height:5.17px;color:#666;transform:scaleX(0.797);">27 00:00</div>
<div class="a" style="left:671.6px;top:141.00px;font-size:5.17px;line-height:5.17px;color:#666;transform:scaleX(0.790);">Wed Jun</div>
<div class="a" style="left:671.6px;top:146.00px;font-size:5.17px;line-height:5.17px;color:#666;transform:scaleX(0.797);">27 06:00</div>
<div class="a" style="left:693.5px;top:141.00px;font-size:5.17px;line-height:5.17px;color:#666;transform:scaleX(0.790);">Wed Jun</div>
<div class="a" style="left:693.5px;top:146.00px;font-size:5.17px;line-height:5.17px;color:#666;transform:scaleX(0.797);">27 12:00</div>
<div class="a" style="left:715.3px;top:141.00px;font-size:5.17px;line-height:5.17px;color:#666;transform:scaleX(0.790);">Wed Jun</div>
<div class="a" style="left:715.3px;top:146.00px;font-size:5.17px;line-height:5.17px;color:#666;transform:scaleX(0.797);">27 18:00</div>
<div class="a" style="left:738.3px;top:141.00px;font-size:5.17px;line-height:5.17px;color:#666;transform:scaleX(0.858);">Thu Jun</div>
<div class="a" style="left:738.3px;top:146.00px;font-size:5.17px;line-height:5.17px;color:#666;transform:scaleX(0.797);">28 00:00</div>
<div class="a" style="left:760.5px;top:141.00px;font-size:5.17px;line-height:5.17px;color:#666;transform:scaleX(0.858);">Thu Jun</div>
<div class="a" style="left:760.5px;top:146.00px;font-size:5.17px;line-height:5.17px;color:#666;transform:scaleX(0.797);">28 06:00</div>
<div class="a" style="left:782.4px;top:141.00px;font-size:5.17px;line-height:5.17px;color:#666;transform:scaleX(0.858);">Thu Jun</div>
<div class="a" style="left:782.4px;top:146.00px;font-size:5.17px;line-height:5.17px;color:#666;transform:scaleX(0.797);">28 12:00</div>
<div class="a" style="left:804.7px;top:141.00px;font-size:5.17px;line-height:5.17px;color:#666;transform:scaleX(0.858);">Thu Jun</div>
<div class="a" style="left:804.7px;top:146.00px;font-size:5.17px;line-height:5.17px;color:#666;transform:scaleX(0.797);">28 18:00</div>
<div class="a" style="left:692px;top:155.5px;width:89px;height:1px;background:#666"></div>
<div class="a" style="left:692px;top:152.5px;width:1px;height:3px;background:#666"></div>
<div class="a" style="left:780px;top:152.5px;width:1px;height:3px;background:#666"></div>
<div class="a" style="left:733px;top:153px;width:12px;height:4px;background:#fff"></div>
<div class="a" style="left:734px;top:153.00px;font-size:5.17px;line-height:5.17px;color:#888;transform:scaleX(0.821);">v1.0</div>
<div class="a" style="left:628.5px;top:162px;width:1px;height:12px;background:#e0e0e4"></div>
<div class="a" style="left:704.5px;top:162px;width:1px;height:12px;background:#e0e0e4"></div>
<div class="a" style="left:632px;top:165.00px;font-size:7.13px;line-height:7.13px;color:#1e1e1e;transform:scaleX(0.850);">Metric</div>
<div class="a" style="left:707px;top:165.00px;font-size:7.13px;line-height:7.13px;color:#1e1e1e;transform:scaleX(0.791);">Value</div>
<div class="a" style="left:620px;top:178.5px;width:8px;height:1px;background:#28b4f0"></div>
<div class="a" style="left:620px;top:185.5px;width:8px;height:4.5px;background:#90dc90"></div>
<div class="a" style="left:620px;top:195px;width:8px;height:4.5px;background:#d4d4d8"></div>
<div class="a" style="left:620px;top:206.8px;width:8px;height:1px;background:#2a8a2a"></div>
<div class="a" style="left:631px;top:176.00px;font-size:7.13px;line-height:7.13px;color:#1e1e1e;transform:scaleX(0.821);"># Lines of Code</div>
<div class="a" style="left:631px;top:186.00px;font-size:7.13px;line-height:7.13px;color:#1e1e1e;transform:scaleX(0.837);"># Lines of Code Covered</div>
<div class="a" style="left:631px;top:195.00px;font-size:7.13px;line-height:7.13px;color:#1e1e1e;transform:scaleX(0.809);"># Lines of Code (NotMyC...</div>
<div class="a" style="left:631px;top:205.00px;font-size:7.13px;line-height:7.13px;color:#1e1e1e;transform:scaleX(0.787);"># Lines of Comments</div>
<div class="a" style="left:824px;top:162px;width:8px;height:48px;background:#f0f0f0"></div>
<div class="a" style="left:824.5px;top:171px;width:7px;height:28px;background:#c8c8cc"></div>
<svg class="a" style="left:825px;top:164px" width="6" height="5"><path d="M1 4l2-2 2 2" stroke="#555" fill="none"/></svg>
<svg class="a" style="left:825px;top:203px" width="6" height="5"><path d="M1 1l2 2 2-2" stroke="#555" fill="none"/></svg>
<div class="a" style="left:202.6px;top:389.8px;width:222.6px;height:21.2px;background:#fff;border:1px solid #d6d6dc"></div>
<div class="a" style="left:212px;top:400.00px;font-size:7.8px;line-height:7.8px;color:#111;font-weight:bold;transform:scaleX(1.015);">% Coverage and % Debt</div>
<svg class="a" style="left:365px;top:394px" width="7" height="11"><path d="M1 1v8l2-2 1.5 3 1-.5L4 6.5h2.7z" fill="#fff" stroke="#999" stroke-width=".7"/></svg>
<div class="a" style="left:374px;top:394px;width:47px;height:12px;background:#eeeef2"></div>
<div class="a" style="left:374px;top:394px;width:12px;height:12px;background:#cde0f6;border:1px solid #3399ff"></div>
<svg class="a" style="left:375px;top:395px" width="10" height="10"><path d="M2 1.5h3c2 0 3 1.5 3 3.5s-1 3.5-3 3.5H2z" fill="none" stroke="#333" stroke-width="1.1"/><path d="M3 8l2-2 1.5 1.5L9 4.5" stroke="#1c8ee6" stroke-width="1" fill="none"/></svg>
<svg class="a" style="left:390px;top:396px" width="8" height="8"><path d="M1 7l1-2.5L6 .5 7.5 2 3.5 6z" fill="#1f5fb0"/></svg>
<svg class="a" style="left:402px;top:397px" width="7" height="6"><path d="M0.5 3h4.5" stroke="#1f6fc0" stroke-width="1.1"/><path d="M3.5 1l2.5 2-2.5 2z" fill="#1f6fc0"/></svg>
<svg class="a" style="left:413px;top:397px" width="6" height="6"><path d="M0.8 0.8l4.4 4.4M5.2 0.8L0.8 5.2" stroke="#c0302a" stroke-width="1.2"/></svg>
<div class="a" style="left:433px;top:389.6px;width:222.7px;height:21.4px;background:#fff;border:1px solid #d6d6dc"></div>
<div class="a" style="left:442px;top:400.00px;font-size:7.8px;line-height:7.8px;color:#111;font-weight:bold;transform:scaleX(0.988);">Issues</div>
<svg class="a" style="left:595px;top:394px" width="7" height="11"><path d="M1 1v8l2-2 1.5 3 1-.5L4 6.5h2.7z" fill="#fff" stroke="#999" stroke-width=".7"/></svg>
<div class="a" style="left:604px;top:394px;width:47px;height:12px;background:#eeeef2"></div>
<div class="a" style="left:604px;top:394px;width:12px;height:12px;background:#cde0f6;border:1px solid #3399ff"></div>
<svg class="a" style="left:605px;top:395px" width="10" height="10"><path d="M2 1.5h3c2 0 3 1.5 3 3.5s-1 3.5-3 3.5H2z" fill="none" stroke="#333" stroke-width="1.1"/><path d="M3 8l2-2 1.5 1.5L9 4.5" stroke="#1c8ee6" stroke-width="1" fill="none"/></svg>
<svg class="a" style="left:620px;top:396px" width="8" height="8"><path d="M1 7l1-2.5L6 .5 7.5 2 3.5 6z" fill="#1f5fb0"/></svg>
<svg class="a" style="left:632px;top:397px" width="7" height="6"><path d="M0.5 3h4.5" stroke="#1f6fc0" stroke-width="1.1"/><path d="M3.5 1l2.5 2-2.5 2z" fill="#1f6fc0"/></svg>
<svg class="a" style="left:643px;top:397px" width="6" height="6"><path d="M0.8 0.8l4.4 4.4M5.2 0.8L0.8 5.2" stroke="#c0302a" stroke-width="1.2"/></svg>
<div class="a" style="left:663.4px;top:389.6px;width:223px;height:21.4px;background:#fff;border:1px solid #d6d6dc"></div>
<div class="a" style="left:672px;top:400.00px;font-size:7.8px;line-height:7.8px;color:#111;font-weight:bold;transform:scaleX(1.013);">Rules</div>
<svg class="a" style="left:826px;top:394px" width="7" height="11"><path d="M1 1v8l2-2 1.5 3 1-.5L4 6.5h2.7z" fill="#fff" stroke="#999" stroke-width=".7"/></svg>
<div class="a" style="left:835px;top:394px;width:47px;height:12px;background:#eeeef2"></div>
<div class="a" style="left:835px;top:394px;width:12px;height:12px;background:#cde0f6;border:1px solid #3399ff"></div>
<svg class="a" style="left:836px;top:395px" width="10" height="10"><path d="M2 1.5h3c2 0 3 1.5 3 3.5s-1 3.5-3 3.5H2z" fill="none" stroke="#333" stroke-width="1.1"/><path d="M3 8l2-2 1.5 1.5L9 4.5" stroke="#1c8ee6" stroke-width="1" fill="none"/></svg>
<svg class="a" style="left:851px;top:396px" width="8" height="8"><path d="M1 7l1-2.5L6 .5 7.5 2 3.5 6z" fill="#1f5fb0"/></svg>
<svg class="a" style="left:863px;top:397px" width="7" height="6"><path d="M0.5 3h4.5" stroke="#1f6fc0" stroke-width="1.1"/><path d="M3.5 1l2.5 2-2.5 2z" fill="#1f6fc0"/></svg>
<svg class="a" style="left:874px;top:397px" width="6" height="6"><path d="M0.8 0.8l4.4 4.4M5.2 0.8L0.8 5.2" stroke="#c0302a" stroke-width="1.2"/></svg>
<div class="a" style="left:198px;top:411px;width:824px;height:13px;background:#eeeef2;border-top:1px solid #dcdce2"></div>
<div class="a" style="left:233.5px;top:412px;width:1px;height:11px;background:#d8d8de"></div>
<div class="a" style="left:202px;top:415.00px;font-size:7.13px;line-height:7.13px;color:#3d8ee8;transform:scaleX(0.803);">Dashboard</div>
<div class="a" style="left:290px;top:412px;width:1px;height:11px;background:#d8d8de"></div>
<div class="a" style="left:236px;top:415.00px;font-size:7.13px;line-height:7.13px;color:#1e1e1e;transform:scaleX(0.793);">Dependency Graph</div>
<div class="a" style="left:345.5px;top:412px;width:1px;height:11px;background:#d8d8de"></div>
<div class="a" style="left:291px;top:415.00px;font-size:7.13px;line-height:7.13px;color:#1e1e1e;transform:scaleX(0.798);">Dependency Matrix</div>
<div class="a" style="left:368px;top:412px;width:1px;height:11px;background:#d8d8de"></div>
<div class="a" style="left:346.3px;top:415.00px;font-size:7.13px;line-height:7.13px;color:#1e1e1e;transform:scaleX(0.784);">Metrics</div>
<div class="a" style="left:420px;top:412px;width:1px;height:11px;background:#d8d8de"></div>
<div class="a" style="left:370px;top:415.00px;font-size:7.13px;line-height:7.13px;color:#1e1e1e;transform:scaleX(0.865);">Project Properties</div>
<div class="a" style="left:453.5px;top:412px;width:1px;height:11px;background:#d8d8de"></div>
<div class="a" style="left:422.3px;top:415.00px;font-size:7.13px;line-height:7.13px;color:#1e1e1e;transform:scaleX(0.921);">Start Page</div>
<div class="a" style="left:504px;top:412px;width:1px;height:11px;background:#d8d8de"></div>
<div class="a" style="left:455.5px;top:415.00px;font-size:7.13px;line-height:7.13px;color:#1e1e1e;transform:scaleX(0.801);">Analysis Error List</div>
<div class="a" style="left:200px;top:412px;width:33.5px;height:11px;background:#e6ebf5"></div>
<div class="a" style="left:202px;top:415.00px;font-size:7.13px;line-height:7.13px;color:#3d8ee8;transform:scaleX(0.803);">Dashboard</div>
<div class="a" style="left:197px;top:426px;width:826px;height:111px;background:#eeeef2;border:1px solid #d6d6de;border-bottom:none"></div>
<div class="a" style="left:198px;top:427px;width:825px;height:11.6px;background:#007acc"></div>
<div class="a" style="left:201px;top:429.00px;font-size:7.24px;line-height:7.24px;color:#fff;transform:scaleX(0.754);">Queries and Rules Explorer</div>
<svg class="a" style="left:1005px;top:430.6px" width="5" height="5"><path d="M1 0.3h3v2.4h.8v.8H.2v-.8H1z" fill="#fff"/><path d="M2.5 3.5v1.3" stroke="#fff" stroke-width=".8"/></svg>
<svg class="a" style="left:1015px;top:430.5px" width="5" height="5"><path d="M.3 .3l4.4 4.3M4.7 .3L.3 4.6" stroke="#fff" stroke-width="1"/></svg>
<svg class="a" style="left:203px;top:443px" width="10" height="10"><path d="M3 0.5h6v6H7.5V2H3z" fill="#9a9aa0"/><rect x="0.8" y="2.8" width="6" height="6" fill="#c8c8cc" stroke="#6a6a70" stroke-width="0.9"/><path d="M2 5.8h3.6M3.8 4v3.6" stroke="#222" stroke-width="0.9"/></svg>
<svg class="a" style="left:217px;top:443px" width="10" height="10"><path d="M3 0.5h6v6H7.5V2H3z" fill="#9a9aa0"/><rect x="0.8" y="2.8" width="6" height="6" fill="#c8c8cc" stroke="#6a6a70" stroke-width="0.9"/><path d="M2 5.8h3.6" stroke="#222" stroke-width="0.9"/></svg>
<div class="a" style="left:237.4px;top:444.00px;font-size:8.05px;line-height:8.05px;color:#1e1e1e;transform:scaleX(0.771);">Create Group</div>
<div class="a" style="left:286px;top:444.00px;font-size:8.05px;line-height:8.05px;color:#1e1e1e;transform:scaleX(0.787);">Rule File</div>
<svg class="a" style="left:312px;top:446.5px" width="4" height="3"><path d="M0 0h4L2 2.5z" fill="#222"/></svg>
<div class="a" style="left:324.5px;top:444.00px;font-size:8.05px;line-height:8.05px;color:#1e1e1e;transform:scaleX(0.752);">Delete</div>
<svg class="a" style="left:355.5px;top:444px" width="6.2" height="6.2"><circle cx="3.1" cy="3.1" r="2.6" fill="#1c8ee6"/><rect x="2.6" y="2.4" width="1" height="2.6" fill="#fff"/><rect x="2.6" y="0.8" width="1" height="0.9" fill="#fff"/></svg>
<div class="a" style="left:198px;top:455px;width:283px;height:82px;background:#fff"></div>
<div class="a" style="left:198px;top:455.5px;width:282.6px;height:8px;background:#e6e6ea"></div>
<svg class="a" style="left:200px;top:457px" width="7" height="5"><path d="M1 1l2.5 2.5L6 1" stroke="#333" stroke-width="1" fill="none"/></svg>
<svg class="a" style="left:211px;top:455.7px" width="8" height="8"><rect x="0.5" y="0.5" width="7" height="7" fill="#fff" stroke="#707076"/><path d="M1.8 4l1.7 1.7L6.3 2.2" stroke="#333" stroke-width="0.9" fill="none"/></svg>
<svg class="a" style="left:219px;top:455.7px" width="8" height="8"><path d="M4 0.8L7.2 4 4 7.2 0.8 4z" fill="#e02424"/><circle cx="4" cy="1.4" r="1.3" fill="#e02424"/><circle cx="4" cy="6.6" r="1.3" fill="#e02424"/><circle cx="1.4" cy="4" r="1.3" fill="#e02424"/><circle cx="6.6" cy="4" r="1.3" fill="#e02424"/><path d="M2.8 2.8l2.4 2.4M5.2 2.8l-2.4 2.4" stroke="#fff" stroke-width="0.8"/></svg>
<div class="a" style="left:227.7px;top:455.4px;width:39.3px;height:7.8px;background:#3d9cf5"></div>
<div class="a" style="left:229.5px;top:456.00px;font-size:8.05px;line-height:8.05px;color:#fff;transform:scaleX(0.763);">Project Rules</div>
<div class="a" style="left:272px;top:456.00px;font-size:7.82px;line-height:7.82px;color:#a8a8ae;font-style:italic;transform:scaleX(0.825);">(318 queries)</div>
<svg class="a" style="left:221px;top:463.8px" width="8" height="8"><rect x="0.5" y="0.5" width="7" height="7" fill="#fff" stroke="#707076"/><path d="M1.8 4l1.7 1.7L6.3 2.2" stroke="#333" stroke-width="0.9" fill="none"/></svg>
<svg class="a" style="left:229px;top:463.8px" width="8" height="8"><path d="M4 0.8L7.2 4 4 7.2 0.8 4z" fill="#e02424"/><circle cx="4" cy="1.4" r="1.3" fill="#e02424"/><circle cx="4" cy="6.6" r="1.3" fill="#e02424"/><circle cx="1.4" cy="4" r="1.3" fill="#e02424"/><circle cx="6.6" cy="4" r="1.3" fill="#e02424"/><path d="M2.8 2.8l2.4 2.4M5.2 2.8l-2.4 2.4" stroke="#fff" stroke-width="0.8"/></svg>
<div class="a" style="left:237.8px;top:463.6px;width:39.099999999999966px;height:8px;border:1px solid #f5b36b;background:#fdf8f0"></div>
<div class="a" style="left:240px;top:464.00px;font-size:8.05px;line-height:8.05px;color:#1e1e1e;transform:scaleX(0.697);">Quality Gates</div>
<div class="a" style="left:281px;top:464.00px;font-size:7.82px;line-height:7.82px;color:#a8a8ae;font-style:italic;transform:scaleX(0.801);">(14 queries)</div>
<svg class="a" style="left:221px;top:472.35px" width="8" height="8"><rect x="0.5" y="0.5" width="7" height="7" fill="#fff" stroke="#707076"/><path d="M1.8 4l1.7 1.7L6.3 2.2" stroke="#333" stroke-width="0.9" fill="none"/></svg>
<div class="a" style="left:229px;top:472.45000000000005px;width:7.4px;height:7.4px;border-radius:50%;background:#3aa83a"></div>
<div class="a" style="left:237.8px;top:472.15000000000003px;width:29.80000000000001px;height:8px;border:1px solid #f5b36b;background:#fdf8f0"></div>
<div class="a" style="left:240px;top:473.00px;font-size:8.05px;line-height:8.05px;color:#1e1e1e;transform:scaleX(0.707);">Hot Spots</div>
<div class="a" style="left:272.6px;top:473.00px;font-size:7.82px;line-height:7.82px;color:#a8a8ae;font-style:italic;transform:scaleX(0.777);">(7 queries)</div>
<svg class="a" style="left:221px;top:480.90000000000003px" width="8" height="8"><rect x="0.5" y="0.5" width="7" height="7" fill="#fff" stroke="#707076"/><path d="M1.8 4l1.7 1.7L6.3 2.2" stroke="#333" stroke-width="0.9" fill="none"/></svg>
<div class="a" style="left:229px;top:481.00000000000006px;width:7.4px;height:7.4px;border-radius:50%;background:#3aa83a"></div>
<div class="a" style="left:240px;top:481.00px;font-size:8.05px;line-height:8.05px;color:#1e1e1e;transform:scaleX(0.723);">Code Smells</div>
<div class="a" style="left:278.5px;top:481.00px;font-size:7.82px;line-height:7.82px;color:#a8a8ae;font-style:italic;transform:scaleX(0.782);">(9 queries)</div>
<svg class="a" style="left:221px;top:489.45px" width="8" height="8"><rect x="0.5" y="0.5" width="7" height="7" fill="#fff" stroke="#707076"/><path d="M1.8 4l1.7 1.7L6.3 2.2" stroke="#333" stroke-width="0.9" fill="none"/></svg>
<div class="a" style="left:229px;top:489.55px;width:7.4px;height:7.4px;border-radius:50%;background:#3aa83a"></div>
<div class="a" style="left:240px;top:490.00px;font-size:8.05px;line-height:8.05px;color:#1e1e1e;transform:scaleX(0.723);">Code Smells Regression</div>
<div class="a" style="left:310.9px;top:490.00px;font-size:7.82px;line-height:7.82px;color:#a8a8ae;font-style:italic;transform:scaleX(0.779);">(9 queries)</div>
<svg class="a" style="left:221px;top:498.0px" width="8" height="8"><rect x="0.5" y="0.5" width="7" height="7" fill="#fff" stroke="#707076"/><path d="M1.8 4l1.7 1.7L6.3 2.2" stroke="#333" stroke-width="0.9" fill="none"/></svg>
<svg class="a" style="left:228.5px;top:497.8px" width="9" height="8"><path d="M4.5 0.3L8.8 7.8H0.2z" fill="#f7c600"/><rect x="4" y="2.8" width="1" height="2.6" fill="#222"/><rect x="4" y="6" width="1" height="1" fill="#222"/></svg>
<div class="a" style="left:237.8px;top:497.8px;width:67.0px;height:8px;border:1px solid #f5b36b;background:#fdf8f0"></div>
<div class="a" style="left:240px;top:498.00px;font-size:8.05px;line-height:8.05px;color:#1e1e1e;transform:scaleX(0.741);">Object Oriented Design</div>
<div class="a" style="left:309.5px;top:498.00px;font-size:7.82px;line-height:7.82px;color:#a8a8ae;font-style:italic;transform:scaleX(0.792);">(14 queries)</div>
<svg class="a" style="left:221px;top:506.55px" width="8" height="8"><rect x="0.5" y="0.5" width="7" height="7" fill="#fff" stroke="#707076"/><path d="M1.8 4l1.7 1.7L6.3 2.2" stroke="#333" stroke-width="0.9" fill="none"/></svg>
<svg class="a" style="left:228.5px;top:506.35px" width="9" height="8"><path d="M4.5 0.3L8.8 7.8H0.2z" fill="#f7c600"/><rect x="4" y="2.8" width="1" height="2.6" fill="#222"/><rect x="4" y="6" width="1" height="1" fill="#222"/></svg>
<div class="a" style="left:240px;top:507.00px;font-size:8.05px;line-height:8.05px;color:#1e1e1e;transform:scaleX(0.758);">Design</div>
<div class="a" style="left:265px;top:507.00px;font-size:7.82px;line-height:7.82px;color:#a8a8ae;font-style:italic;transform:scaleX(0.782);">(15 queries)</div>
<svg class="a" style="left:221px;top:515.1px" width="8" height="8"><rect x="0.5" y="0.5" width="7" height="7" fill="#fff" stroke="#707076"/><path d="M1.8 4l1.7 1.7L6.3 2.2" stroke="#333" stroke-width="0.9" fill="none"/></svg>
<svg class="a" style="left:228.5px;top:514.9px" width="9" height="8"><path d="M4.5 0.3L8.8 7.8H0.2z" fill="#f7c600"/><rect x="4" y="2.8" width="1" height="2.6" fill="#222"/><rect x="4" y="6" width="1" height="1" fill="#222"/><path d="M0 0h3.5L0 3.5z" fill="#e02424"/></svg>
<div class="a" style="left:240px;top:515.00px;font-size:8.05px;line-height:8.05px;color:#1e1e1e;transform:scaleX(0.745);">Architecture</div>
<div class="a" style="left:279.3px;top:515.00px;font-size:7.82px;line-height:7.82px;color:#a8a8ae;font-style:italic;transform:scaleX(0.784);">(10 queries)</div>
<svg class="a" style="left:221px;top:523.6500000000001px" width="8" height="8"><rect x="0.5" y="0.5" width="7" height="7" fill="#fff" stroke="#707076"/><path d="M1.8 4l1.7 1.7L6.3 2.2" stroke="#333" stroke-width="0.9" fill="none"/></svg>
<div class="a" style="left:229px;top:523.75px;width:7.4px;height:7.4px;border-radius:50%;background:#3aa83a"></div>
<div class="a" style="left:237.8px;top:523.45px;width:64.80000000000001px;height:8px;border:1px solid #f5b36b;background:#fdf8f0"></div>
<div class="a" style="left:240px;top:524.00px;font-size:8.05px;line-height:8.05px;color:#1e1e1e;transform:scaleX(0.725);">API Breaking Changes</div>
<div class="a" style="left:307px;top:524.00px;font-size:7.82px;line-height:7.82px;color:#a8a8ae;font-style:italic;transform:scaleX(0.777);">(9 queries)</div>
<svg class="a" style="left:221px;top:532.2px" width="8" height="8"><rect x="0.5" y="0.5" width="7" height="7" fill="#fff" stroke="#707076"/><path d="M1.8 4l1.7 1.7L6.3 2.2" stroke="#333" stroke-width="0.9" fill="none"/></svg>
<div class="a" style="left:229px;top:532.3px;width:7.4px;height:7.4px;border-radius:50%;background:#3aa83a"></div>
<div class="a" style="left:237.8px;top:532.0px;width:45.19999999999999px;height:8px;border:1px solid #f5b36b;background:#fdf8f0"></div>
<div class="a" style="left:240px;top:533.00px;font-size:8.05px;line-height:8.05px;color:#1e1e1e;transform:scaleX(0.710);">Code Coverage</div>
<div class="a" style="left:288px;top:533.00px;font-size:7.82px;line-height:7.82px;color:#a8a8ae;font-style:italic;transform:scaleX(0.792);">(12 queries)</div>
<div class="a" style="left:480.6px;top:455px;width:7.4px;height:82px;background:#f0f0f0"></div>
<div class="a" style="left:481px;top:464px;width:6.6px;height:25.6px;background:#c8c8cc"></div>
<svg class="a" style="left:481px;top:457px" width="6" height="5"><path d="M1 4l2-2 2 2" stroke="#333" fill="none"/></svg>
<svg class="a" style="left:481px;top:529px" width="6" height="5"><path d="M1 1l2 2 2-2" stroke="#333" fill="none"/></svg>
<div class="a" style="left:488px;top:439px;width:4px;height:98px;background:#e8e8ec"></div>
<div class="a" style="left:489px;top:439px;width:1px;height:98px;background:#d0d0d6"></div>
<div class="a" style="left:495.8px;top:444.00px;font-size:8.05px;line-height:8.05px;color:#1e1e1e;transform:scaleX(0.749);">Create Query</div>
<div class="a" style="left:543.6px;top:444.00px;font-size:8.05px;line-height:8.05px;color:#a0a0a6;transform:scaleX(0.768);">Delete Query</div>
<svg class="a" style="left:598.5px;top:443.5px" width="8" height="8"><circle cx="4" cy="4" r="3.5" fill="#b4b4b8"/><circle cx="4" cy="4" r="1.8" fill="#e8e8ea"/></svg>
<svg class="a" style="left:612px;top:443.5px" width="8" height="8"><circle cx="4" cy="4" r="3.5" fill="#b4b4b8"/><circle cx="4" cy="4" r="1.8" fill="#e8e8ea"/></svg>
<div class="a" style="left:623px;top:440.2px;width:133.3px;height:13.8px;background:#ececee;border:1px solid #b4b4ba"></div>
<div class="a" style="left:626.5px;top:444.00px;font-size:8.05px;line-height:8.05px;color:#1e1e1e;transform:scaleX(0.752);">Project Rules</div>
<svg class="a" style="left:751px;top:446.5px" width="4" height="3"><path d="M0 0h4L2 2.5z" fill="#222"/></svg>
<div class="a" style="left:762.4px;top:440.2px;width:63.3px;height:13.8px;background:#f3f6fb;border:1px solid #5a9ee6"></div>
<svg class="a" style="left:765px;top:442px" width="9" height="10"><path d="M2 1h2l1 3h2v2H5v3" stroke="#444" stroke-width="1" fill="none"/><rect x="1" y="0.5" width="2" height="2" fill="#888"/></svg>
<div class="a" style="left:775.5px;top:444.00px;font-size:8.05px;line-height:8.05px;color:#1e1e1e;transform:scaleX(0.752);">View Sub Groups</div>
<div class="a" style="left:492px;top:455px;width:530px;height:82px;background:#fff"></div>
<div class="a" style="left:492px;top:455px;width:411px;height:11.5px;background:#f5f5f6"></div>
<div class="a" style="left:495.5px;top:458.00px;font-size:7.59px;line-height:7.59px;color:#1e1e1e;transform:scaleX(0.751);">Active</div>
<div class="a" style="left:529px;top:458.00px;font-size:7.59px;line-height:7.59px;color:#1e1e1e;transform:scaleX(0.791);">#Items</div>
<div class="a" style="left:596px;top:458.00px;font-size:7.59px;line-height:7.59px;color:#1e1e1e;transform:scaleX(0.735);">Code Queries and Rules</div>
<div class="a" style="left:492px;top:466.5px;width:411px;height:10px;background:#e6e6e8"></div>
<div class="a" style="left:499px;top:469.00px;font-size:8.05px;line-height:8.05px;color:#1e1e1e;transform:scaleX(0.794);">Project Rules \ Quality Gates</div>
<div class="a" style="left:492px;top:486.1px;width:520px;height:1px;background:#f6f2e6"></div>
<svg class="a" style="left:500.6px;top:477.2px" width="8" height="8"><rect x="0.5" y="0.5" width="7" height="7" fill="#fff" stroke="#707076"/><path d="M1.8 4l1.7 1.7L6.3 2.2" stroke="#333" stroke-width="0.9" fill="none"/></svg>
<div class="a" style="left:517px;top:477.3px;width:8px;height:8px;border-radius:50%;background:#3aa83a"></div>
<div class="a" style="left:527px;top:478.00px;font-size:7.47px;line-height:7.47px;color:#1e1e1e;transform:scaleX(0.962);">8</div>
<div class="a" style="left:594.6px;top:479.00px;font-size:8.05px;line-height:8.05px;color:#1e1e1e;transform:scaleX(0.801);">Quality Gates Evolution</div>
<div class="a" style="left:492px;top:495.8px;width:520px;height:1px;background:#f6f2e6"></div>
<svg class="a" style="left:500.6px;top:486.9px" width="8" height="8"><rect x="0.5" y="0.5" width="7" height="7" fill="#fff" stroke="#707076"/><path d="M1.8 4l1.7 1.7L6.3 2.2" stroke="#333" stroke-width="0.9" fill="none"/></svg>
<svg class="a" style="left:516.5px;top:486.7px" width="8" height="8"><path d="M4 0.3L7.7 4 4 7.7 0.3 4z" fill="#3aa83a"/></svg>
<div class="a" style="left:527px;top:487.00px;font-size:7.47px;line-height:7.47px;color:#1e1e1e;transform:scaleX(0.819);">N/A %</div>
<div class="a" style="left:594.6px;top:489.00px;font-size:8.05px;line-height:8.05px;color:#1e1e1e;transform:scaleX(0.810);">Percentage Coverage</div>
<div class="a" style="left:492px;top:505.5px;width:520px;height:1px;background:#f6f2e6"></div>
<svg class="a" style="left:500.6px;top:496.59999999999997px" width="8" height="8"><rect x="0.5" y="0.5" width="7" height="7" fill="#fff" stroke="#707076"/><path d="M1.8 4l1.7 1.7L6.3 2.2" stroke="#333" stroke-width="0.9" fill="none"/></svg>
<svg class="a" style="left:516.5px;top:496.4px" width="8" height="8"><path d="M4 0.3L7.7 4 4 7.7 0.3 4z" fill="#3aa83a"/></svg>
<div class="a" style="left:527px;top:497.00px;font-size:7.47px;line-height:7.47px;color:#1e1e1e;transform:scaleX(0.819);">N/A %</div>
<div class="a" style="left:594.6px;top:498.00px;font-size:8.05px;line-height:8.05px;color:#1e1e1e;transform:scaleX(0.815);">Percentage Coverage on New Code</div>
<div class="a" style="left:492px;top:515.2px;width:520px;height:1px;background:#f6f2e6"></div>
<svg class="a" style="left:500.6px;top:506.3px" width="8" height="8"><rect x="0.5" y="0.5" width="7" height="7" fill="#fff" stroke="#707076"/><path d="M1.8 4l1.7 1.7L6.3 2.2" stroke="#333" stroke-width="0.9" fill="none"/></svg>
<svg class="a" style="left:516.5px;top:506.1px" width="8" height="8"><path d="M4 0.3L7.7 4 4 7.7 0.3 4z" fill="#3aa83a"/></svg>
<div class="a" style="left:527px;top:507.00px;font-size:7.47px;line-height:7.47px;color:#1e1e1e;transform:scaleX(0.819);">N/A %</div>
<div class="a" style="left:594.6px;top:508.00px;font-size:8.05px;line-height:8.05px;color:#1e1e1e;transform:scaleX(0.812);">Percentage Coverage on Refactored Code</div>
<div class="a" style="left:492px;top:524.9px;width:520px;height:1px;background:#f6f2e6"></div>
<svg class="a" style="left:500.6px;top:516.0px" width="8" height="8"><rect x="0.5" y="0.5" width="7" height="7" fill="#fff" stroke="#707076"/><path d="M1.8 4l1.7 1.7L6.3 2.2" stroke="#333" stroke-width="0.9" fill="none"/></svg>
<svg class="a" style="left:516.5px;top:515.8px" width="8" height="8"><path d="M4 0.3L7.7 4 4 7.7 0.3 4z" fill="#3aa83a"/></svg>
<div class="a" style="left:527px;top:516.00px;font-size:7.47px;line-height:7.47px;color:#1e1e1e;transform:scaleX(0.730);">0 issues</div>
<div class="a" style="left:594.6px;top:518.00px;font-size:8.05px;line-height:8.05px;color:#1e1e1e;transform:scaleX(0.810);">Blocker Issues</div>
<div class="a" style="left:492px;top:534.6px;width:520px;height:1px;background:#f6f2e6"></div>
<svg class="a" style="left:500.6px;top:525.7px" width="8" height="8"><rect x="0.5" y="0.5" width="7" height="7" fill="#fff" stroke="#707076"/><path d="M1.8 4l1.7 1.7L6.3 2.2" stroke="#333" stroke-width="0.9" fill="none"/></svg>
<svg class="a" style="left:516.5px;top:525.5px" width="8" height="8"><path d="M4 0.3L7.7 4 4 7.7 0.3 4z" fill="#3aa83a"/></svg>
<div class="a" style="left:527px;top:526.00px;font-size:7.47px;line-height:7.47px;color:#1e1e1e;transform:scaleX(0.730);">0 issues</div>
<div class="a" style="left:594.6px;top:527.00px;font-size:8.05px;line-height:8.05px;color:#1e1e1e;transform:scaleX(0.806);">Critical Issues</div>
<div class="a" style="left:492px;top:544.3000000000001px;width:520px;height:1px;background:#f6f2e6"></div>
<svg class="a" style="left:500.6px;top:535.4000000000001px" width="8" height="8"><rect x="0.5" y="0.5" width="7" height="7" fill="#fff" stroke="#707076"/><path d="M1.8 4l1.7 1.7L6.3 2.2" stroke="#333" stroke-width="0.9" fill="none"/></svg>
<svg class="a" style="left:516.5px;top:535.2px" width="8" height="8"><path d="M4 0.3L7.7 4 4 7.7 0.3 4z" fill="#3aa83a"/></svg>
<div class="a" style="left:527px;top:536.00px;font-size:7.47px;line-height:7.47px;color:#1e1e1e;transform:scaleX(0.730);">0 issues</div>
<div class="a" style="left:594.6px;top:537.00px;font-size:8.05px;line-height:8.05px;color:#1e1e1e;transform:scaleX(0.832);">High Issues</div>
<div class="a" style="left:525px;top:477px;width:1px;height:60px;background:#f4f4f4"></div>
<div class="a" style="left:593px;top:477px;width:1px;height:60px;background:#f4f4f4"></div>
<div class="a" style="left:1013px;top:455px;width:9px;height:82px;background:#f0f0f0"></div>
<div class="a" style="left:1013.5px;top:463.5px;width:8px;height:8px;background:#c8c8cc"></div>
<svg class="a" style="left:1014px;top:457px" width="7" height="5"><path d="M1 4l2.5-2.5L6 4" stroke="#333" fill="none"/></svg>
<svg class="a" style="left:1014px;top:528px" width="7" height="5"><path d="M1 1l2.5 2.5L6 1" stroke="#333" fill="none"/></svg>
<div class="a" style="left:0px;top:537px;width:1024px;height:17px;background:#007acc"></div>
<div class="a" style="left:3px;top:542.00px;font-size:7.82px;line-height:7.82px;color:#fff;transform:scaleX(0.775);">Ready</div>
<div class="a" style="left:859.5px;top:541.00px;font-size:13.5px;line-height:13.5px;color:#d4d4d4;transform:scaleX(0.974);text-shadow:0.6px 0.6px 0.8px #222;-webkit-text-stroke:0;">© 2018, Nithin Mohan T K</div>
<div class="a" style="left:1003px;top:539px;width:1px;height:13px;background:#f0f0f0"></div>
<div class="a" style="left:1008.5px;top:540.5px;width:10px;height:10px;background:#f01010;border-radius:50%;border:1px solid #f4f4f4"></div>
<div class="a" style="left:0px;top:554px;width:1024px;height:3px;background:#0e1823"></div>
<div class="a" style="left:26px;top:554px;width:183px;height:3px;background:#e6e6e6"></div>
<div class="a" style="left:445px;top:554px;width:26px;height:3px;background:#b86a2a"></div>
<div class="a" style="left:471px;top:554px;width:26px;height:3px;background:#4a5666"></div>
</body></html>
